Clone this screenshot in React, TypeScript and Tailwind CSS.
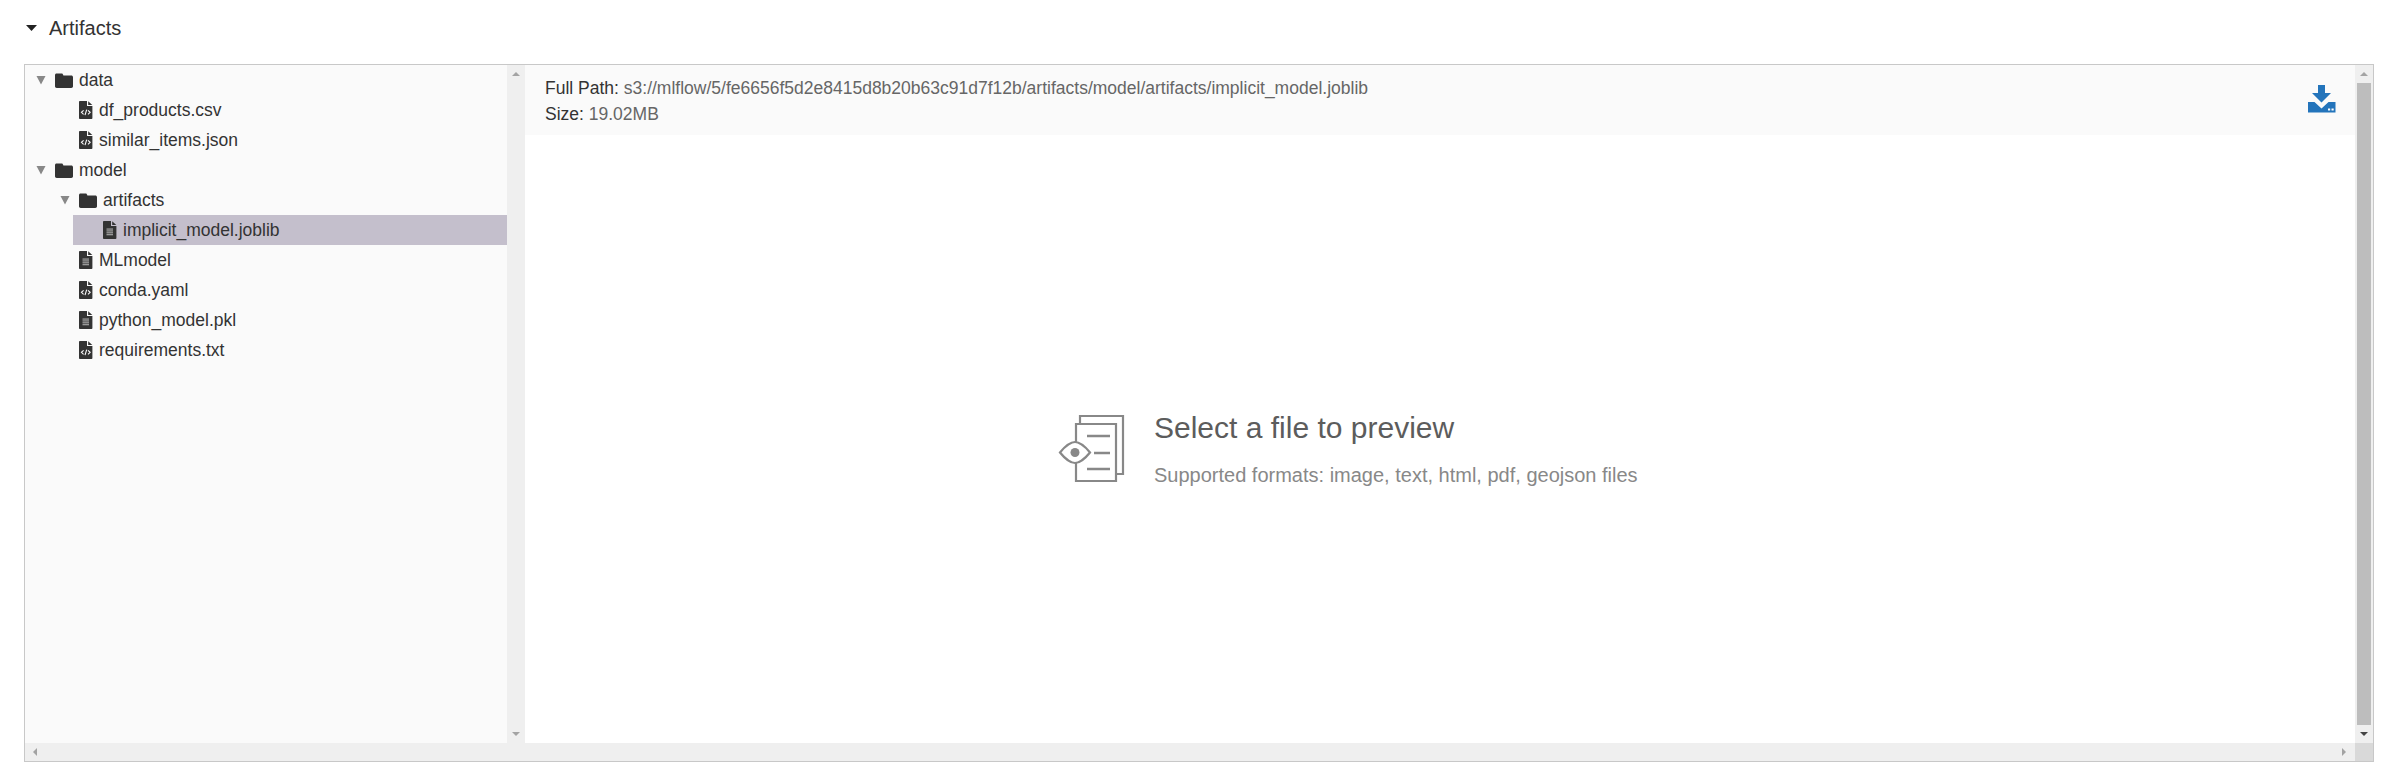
const FolderIcon = () => (
  <svg width="18" height="15" viewBox="0 0 18 15" className="shrink-0">
    <path d="M1.5 0.5H6.5C7.5 0.5 7.8 1 8 1.6L8.4 2.6H16.3C17.2 2.6 18 3.3 18 4.2V13.3C18 14.2 17.2 15 16.3 15H1.7C0.8 15 0 14.2 0 13.3V2C0 1.2 0.7 0.5 1.5 0.5Z" fill="#333333" />
  </svg>
)

const FileIcon = ({ code }: { code: boolean }) => (
  <svg width="14" height="18" viewBox="0 0 14 19" preserveAspectRatio="none" className="shrink-0">
    <path d="M0.8 0H8V5.2H13.4V18.2C13.4 18.6 13 19 12.6 19H0.8C0.4 19 0 18.6 0 18.2V0.8C0 0.4 0.4 0 0.8 0Z" fill="#333333" />
    <path d="M9.2 0.2L13.3 4.2H9.2Z" fill="#333333" />
    {code ? (
      <path d="M4.6 9.8L2.4 12L4.6 14.2M9 9.8L11.2 12L9 14.2M7.7 9L6 15" stroke="#fafafa" strokeWidth="1.1" fill="none" />
    ) : (
      <path d="M3.5 8.5H10M3.5 10.5H10M3.5 12.5H10M3.5 14.5H10" stroke="#bdbdbd" strokeWidth="1" />
    )}
  </svg>
)

const Caret = () => (
  <svg width="10" height="10" viewBox="0 0 10 10" className="shrink-0">
    <path d="M0.5 1H9.5L5 9.5Z" fill="#888888" />
  </svg>
)

const Arrow = ({ d, color }: { d: string; color: string }) => (
  <svg width="12" height="12" viewBox="0 0 12 12">
    <path d={d} fill={color} />
  </svg>
)

type Row = { name: string; depth: number; folder?: boolean; code?: boolean; selected?: boolean }

const rows: Row[] = [
  { name: "data", depth: 0, folder: true },
  { name: "df_products.csv", depth: 1, code: true },
  { name: "similar_items.json", depth: 1, code: true },
  { name: "model", depth: 0, folder: true },
  { name: "artifacts", depth: 1, folder: true },
  { name: "implicit_model.joblib", depth: 2, selected: true },
  { name: "MLmodel", depth: 1 },
  { name: "conda.yaml", depth: 1, code: true },
  { name: "python_model.pkl", depth: 1 },
  { name: "requirements.txt", depth: 1, code: true },
]

const depthClass = ["ml-0", "ml-[24px]", "ml-[48px]"]

const TreeRow = ({ row }: { row: Row }) => (
  <div className={`flex h-[30px] items-center text-[17.5px] text-[#333333] ${depthClass[row.depth]} ${row.selected ? "bg-[#c4bfcc]" : ""}`}>
    <div className="flex w-[30px] shrink-0 justify-center pl-[1px]">{row.folder && <Caret />}</div>
    {row.folder ? <FolderIcon /> : <FileIcon code={!!row.code} />}
    <span className="ml-[6px]">{row.name}</span>
  </div>
)

const App = () => {
  return (
    <div className="h-[776px] w-full overflow-hidden bg-white font-['Liberation_Sans',Arial,sans-serif]">
      <div className="flex h-[56px] items-center pl-[26px]">
        <svg width="11" height="6" viewBox="0 0 11 6">
          <path d="M0 0H11L5.5 6Z" fill="#222222" />
        </svg>
        <span className="ml-[12px] text-[20px] text-[#333333]">Artifacts</span>
      </div>

      <div className="ml-[24px] mr-[32px] mt-[8px] flex h-[698px] flex-col border border-[#c8c8c8]">
        <div className="flex min-h-0 flex-1">
          {/* ツリー */}
          <div className="w-[482px] shrink-0 bg-[#fafafa]">
            {rows.map((row) => (
              <TreeRow key={row.name} row={row} />
            ))}
          </div>
          <div className="flex w-[18px] shrink-0 flex-col items-center justify-between bg-[#efefef] py-[3px]">
            <Arrow d="M2 8H10L6 4Z" color="#a3a3a3" />
            <Arrow d="M2 4H10L6 8Z" color="#a3a3a3" />
          </div>

          {/* プレビュー */}
          <div className="flex min-w-0 flex-1 flex-col">
            <div className="flex h-[70px] shrink-0 items-start justify-between bg-[#fafafa] pl-[20px] pr-[19px] pt-[10px] text-[17.5px] leading-[26px] text-[#333333]">
              <div>
                <div>
                  Full Path: <span className="text-[#666666]">s3://mlflow/5/fe6656f5d2e8415d8b20b63c91d7f12b/artifacts/model/artifacts/implicit_model.joblib</span>
                </div>
                <div>
                  Size: <span className="text-[#666666]">19.02MB</span>
                </div>
              </div>
              <svg width="28" height="28" viewBox="0 0 28 28" className="mt-[10px]">
                <path d="M10 0H17V8H23L13.5 17.5L4 8H10Z" fill="#2374bb" />
                <path d="M0 17H6.5L13.5 23.5L20.5 17H27.5V27.5H0Z" fill="#2374bb" />
                <rect x="20" y="23.5" width="2.2" height="2" fill="#ffffff" />
                <rect x="23.5" y="23.5" width="2.2" height="2" fill="#ffffff" />
              </svg>
            </div>
            <div className="flex flex-1 items-center pl-[533px] pt-[18px]">
              <svg width="76" height="76" viewBox="0 0 76 76" className="shrink-0" fill="none" stroke="#888888" strokeWidth="2.2">
                <path d="M22 13V6H65V64H59" />
                <path d="M18 32V14H58V71H18V53" />
                <path d="M2 42.5C8 35 14 32 17 32C20 32 26 35 32 42.5C26 50 20 53 17 53C14 53 8 50 2 42.5Z" />
                <circle cx="17" cy="42.5" r="4.5" fill="#888888" stroke="none" />
                <path d="M29 26H52M36 43H52M29 59H52" strokeWidth="2.6" />
              </svg>
              <div className="ml-[20px]">
                <div className="text-[30px] leading-[36px] text-[#5c5c5c]">Select a file to preview</div>
                <div className="mt-[17px] text-[20px] leading-[24px] text-[#888888]">Supported formats: image, text, html, pdf, geojson files</div>
              </div>
            </div>
          </div>

          <div className="flex w-[18px] shrink-0 flex-col items-center bg-[#efefef] py-[3px]">
            <Arrow d="M2 8H10L6 4Z" color="#a3a3a3" />
            <div className="my-[3px] w-[14px] flex-1 bg-[#bdbdbd]" />
            <Arrow d="M2 4H10L6 8Z" color="#444444" />
          </div>
        </div>

        <div className="flex h-[18px] shrink-0 items-center justify-between bg-[#efefef] pl-[4px]">
          <Arrow d="M8 2V10L4 6Z" color="#a3a3a3" />
          <div className="flex items-center">
            <Arrow d="M4 2V10L8 6Z" color="#a3a3a3" />
            <div className="ml-[5px] h-[18px] w-[18px] bg-[#d9d9d9]" />
          </div>
        </div>
      </div>
    </div>
  )
}

export default App
